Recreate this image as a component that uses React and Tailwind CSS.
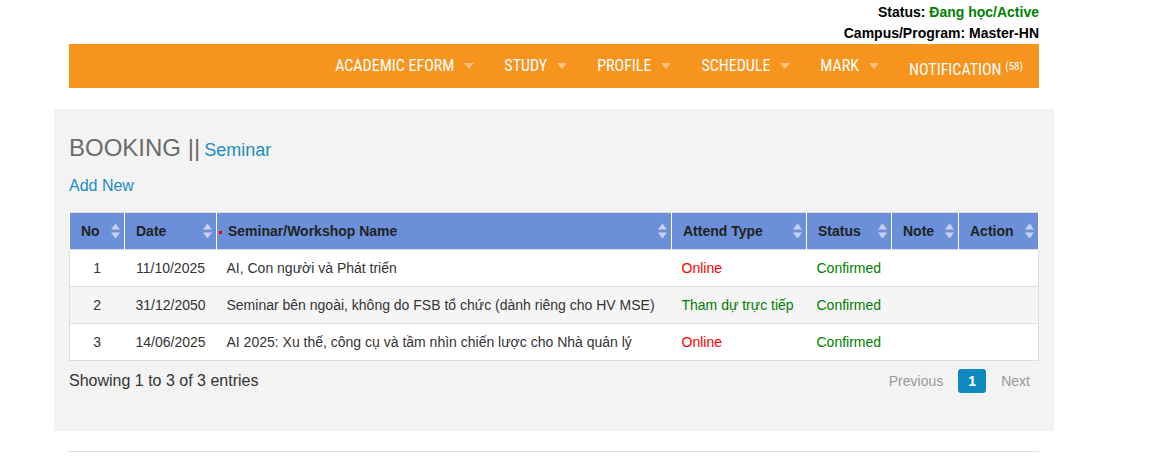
import React from 'react';

const navItems = ['ACADEMIC EFORM', 'STUDY', 'PROFILE', 'SCHEDULE', 'MARK'];

const rows = [
  { no: 1, date: '11/10/2025', name: 'AI, Con người và Phát triển', type: 'Online', status: 'Confirmed' },
  { no: 2, date: '31/12/2050', name: 'Seminar bên ngoài, không do FSB tổ chức (dành riêng cho HV MSE)', type: 'Tham dự trực tiếp', status: 'Confirmed' },
  { no: 3, date: '14/06/2025', name: 'AI 2025: Xu thế, công cụ và tầm nhìn chiến lược cho Nhà quản lý', type: 'Online', status: 'Confirmed' },
];

const cols = [
  { label: 'No', w: 'w-[55px]' },
  { label: 'Date', w: 'w-[92px]' },
  { label: 'Seminar/Workshop Name', w: 'w-[455px]', dot: true },
  { label: 'Attend Type', w: 'w-[135px]' },
  { label: 'Status', w: 'w-[85px]' },
  { label: 'Note', w: 'w-[67px]' },
  { label: 'Action', w: 'w-[80px]' },
];

function Caret() {
  return (
    <svg width="10" height="6" viewBox="0 0 10 6" className="ml-[10px]">
      <path d="M0 0 L10 0 L5 6 Z" fill="#fbc27e" />
    </svg>
  );
}

function SortIcon() {
  return (
    <svg width="9" height="15" viewBox="0 0 9 15" className="absolute right-[4px] top-1/2 -translate-y-1/2">
      <path d="M4.5 0 L9 6 L0 6 Z" fill="#c9d3ee" />
      <path d="M0 9 L9 9 L4.5 15 Z" fill="#c9d3ee" />
    </svg>
  );
}

export default function App() {
  return (
    <div className="min-h-screen bg-white text-[14px] text-[#333]" style={{ fontFamily: '"Liberation Sans", Arial, sans-serif' }}>
      <div className="ml-[69px] w-[970px]">
        <div className="pt-[2px] text-right text-[14px] font-bold leading-[21px] text-black">
          <div>Status: <span className="text-[#008000]">Đang học/Active</span></div>
          <div>Campus/Program: Master-HN</div>
        </div>
        <nav
          className="flex h-[44px] items-center justify-end bg-[#f7941d] pr-[16px] text-[16px] text-white"
          style={{ fontFamily: '"Liberation Sans Narrow", "Arial Narrow", "Roboto Condensed", sans-serif' }}
        >
          {navItems.map((item) => (
            <div key={item} className="flex items-center px-[15px]">
              <span>{item}</span>
              <Caret />
            </div>
          ))}
          <div className="pl-[15px] pt-[8px]">
            NOTIFICATION <sup className="text-[11px]">(58)</sup>
          </div>
        </nav>
      </div>

      <div className="ml-[54px] mt-[21px] w-[1000px] bg-[#f3f3f3] px-[15px] pt-[26px] pb-[38px]">
        <div className="flex items-baseline gap-[4px] leading-[26px]">
          <span className="text-[24px] text-[#6b6b6b]">BOOKING ||</span>
          <span className="text-[18px] text-[#1b8ec2]">Seminar</span>
        </div>
        <div className="mt-[14px] text-[16px] leading-[18px] text-[#1b8ec2]">Add New</div>

        <table className="mt-[17px] w-[969px] table-fixed border-collapse border border-[#ddd]">
          <thead>
            <tr className="h-[37px] bg-[#6b8fd8]">
              {cols.map((c) => (
                <th key={c.label} className={`${c.w} relative border-x border-white pl-[11px] text-left font-bold text-[#222]`}>
                  {c.dot && <span className="absolute left-[2px] top-[18px] h-[3px] w-[3px] bg-[#e00]" />}
                  {c.label}
                  <SortIcon />
                </th>
              ))}
            </tr>
          </thead>
          <tbody>
            {rows.map((r, i) => (
              <tr key={r.no} className={`h-[37px] border-t border-[#ddd] ${i % 2 === 1 ? 'bg-[#f5f5f5]' : 'bg-white'}`}>
                <td className="text-center">{r.no}</td>
                <td className="text-center">{r.date}</td>
                <td className="whitespace-nowrap pl-[10px]">{r.name}</td>
                <td className={`pl-[10px] ${r.type === 'Online' ? 'text-[#ff0000]' : 'text-[#008000]'}`}>{r.type}</td>
                <td className="pl-[10px] text-[#008000]">{r.status}</td>
                <td />
                <td />
              </tr>
            ))}
          </tbody>
        </table>

        <div className="mt-[8px] flex items-center justify-between">
          <div className="text-[16px] leading-[24px]">Showing 1 to 3 of 3 entries</div>
          <div className="mr-[9px] flex items-center text-[#999]">
            <span className="mr-[15px]">Previous</span>
            <span className="flex h-[24px] w-[28px] items-center justify-center rounded-[3px] bg-[#0d8bc0] font-bold text-white">1</span>
            <span className="ml-[15px]">Next</span>
          </div>
        </div>
      </div>

      <div className="ml-[69px] mt-[20px] w-[970px] border-t border-[#ddd]" />
    </div>
  );
}
